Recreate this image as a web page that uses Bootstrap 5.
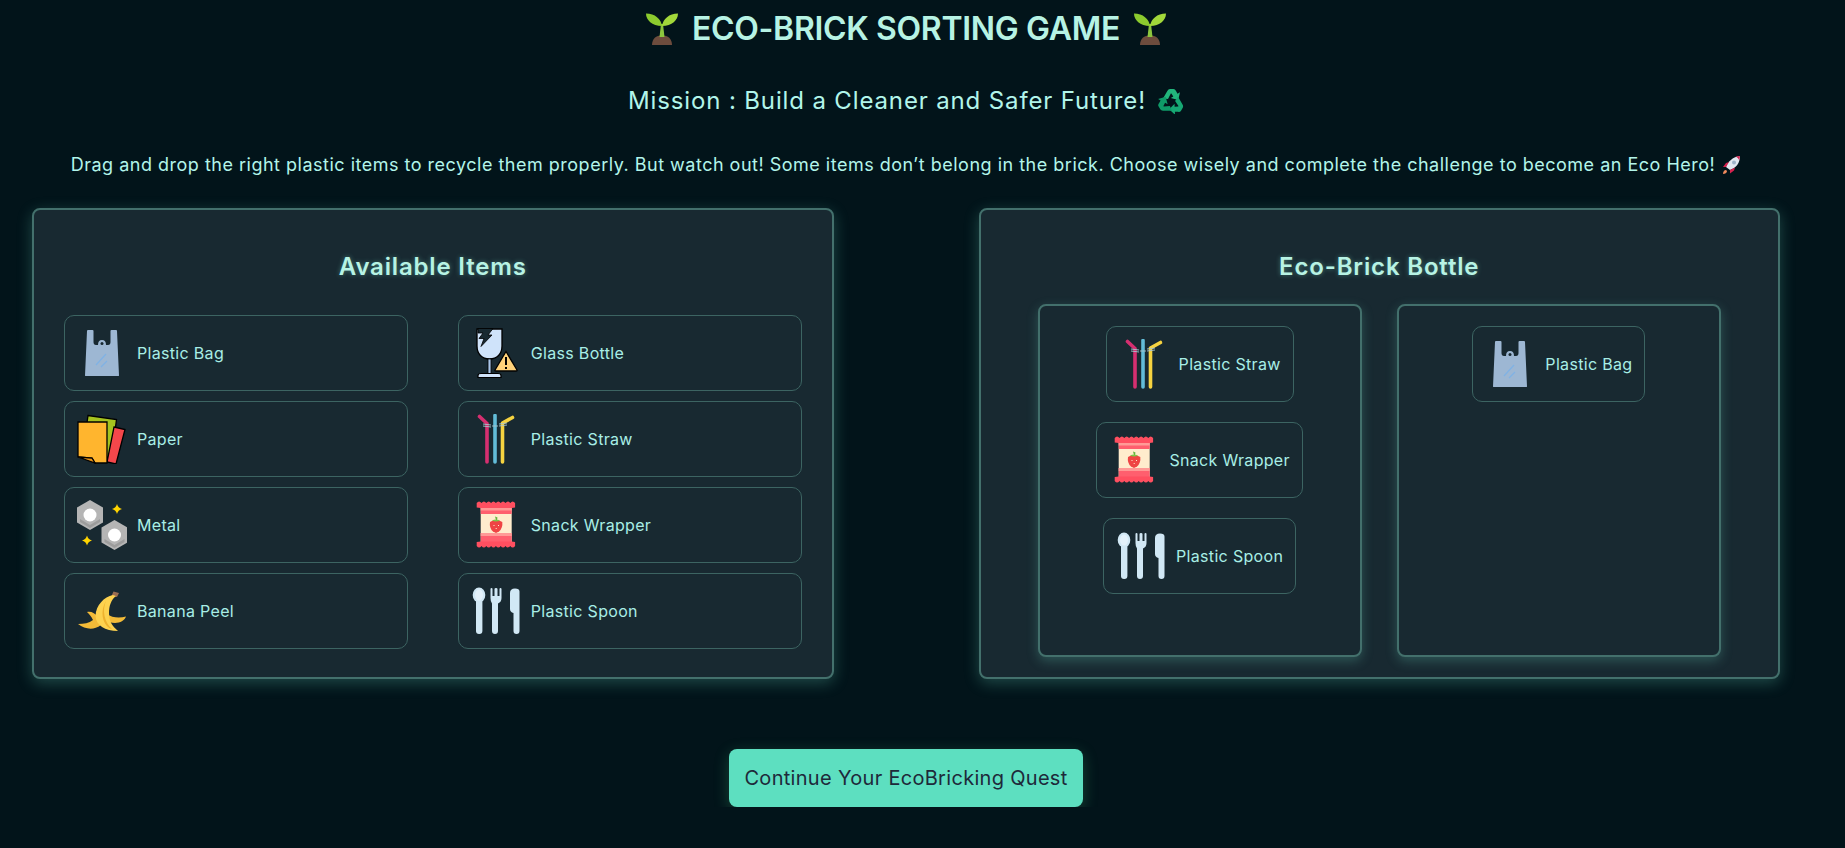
<!DOCTYPE html>
<html lang="en">
<head>
<meta charset="UTF-8">
<meta name="viewport" content="width=device-width, initial-scale=1.0">
<title>Eco-Brick Sorting Game</title>
<link href="https://cdn.jsdelivr.net/npm/bootstrap@5.3.3/dist/css/bootstrap.min.css" rel="stylesheet">
<style>
  body { background: #02141a; color: #b2f5ea; font-family: Inter, "Noto Sans", sans-serif; overflow: hidden; }
  .game-wrap { padding: 5px 65px 0 32px; }
  .game-title { font-size: 32px; line-height: 48px; font-weight: 600; margin: 0; gap: 14px; color: #b7f3e4; letter-spacing: -.33px; }
  .game-mission { font-size: 24px; line-height: 36px; font-weight: 400; margin: 30px 0 0; gap: 12px; letter-spacing: .86px; }
  .game-intro { font-size: 18px; line-height: 26px; margin: 33px 0 30px; gap: 8px; letter-spacing: .5px; white-space: nowrap; }
  .panels { display: grid; grid-template-columns: 1fr 1fr; column-gap: 145px; }
  .panel-box { background: #182931; border: 2px solid #43706c; border-radius: 8px; box-shadow: 0 4px 15px rgba(100, 200, 180, .3); padding: 38px 30px 28px; }
  .panel-head { font-size: 24px; line-height: 36px; font-weight: 600; margin: 0 0 30px; padding-top: 1px; text-shadow: 0 0 5px rgba(120, 220, 200, .45); color: #b7f3e4; letter-spacing: .83px; }
  .items-grid { display: grid; grid-template-columns: 1fr 1fr; column-gap: 50px; row-gap: 10px; }
  .eco-item { padding: 12px; border: 1px solid #3c6462; border-radius: 10px; background: #182931; color: #a8eee6; font-size: 16px; line-height: 24px; letter-spacing: .32px; }
  .eco-ico { width: 50px; height: 50px; flex: none; margin-right: 10px; }
  .bottle-box { padding-left: 57px; padding-right: 57px; padding-bottom: 20px; }
  .bottle-box .panel-head { margin-bottom: 19px; }
  .drop-row { display: grid; grid-template-columns: 1fr 1fr; column-gap: 35px; height: 353px; }
  .drop-zone { background: #182931; border: 2px solid #43706c; border-radius: 8px; box-shadow: 0 4px 12px rgba(100, 200, 180, .28); padding-top: 20px; gap: 20px; }
  .quest-btn { margin-top: 70px; height: 58px; padding: 0 15px; background: #5ddfc0; border: 0; border-radius: 8px; color: #1e2a3a; font-size: 20px; letter-spacing: .3px; box-shadow: 0 4px 15px rgba(72, 187, 120, .3); }
  .quest-btn:hover { background: #5ddfc0; color: #1e2a3a; }
</style>
</head>
<body>

<svg width="0" height="0" class="d-block position-absolute">
  <defs>
    <symbol id="i-sprout" viewBox="0 0 32 32">
      <path d="M6 32c0-6 4-9.700 10-9.700s10 3.700 10 9.700z" fill="#6d4c3d"/>
      <path d="M13.500 24L15 11h2l1.500 13z" fill="#8cc63e"/>
      <path d="M16 13C15 6 9 .5 0 .5 0 7 6 13 16 13z" fill="#8ccb2e"/>
      <path d="M16 13C17 6 23 .5 32 .5 32 7 26 13 16 13z" fill="#a2d83a"/>
    </symbol>
    <symbol id="i-recycle" viewBox="0 0 26 26">
      <defs><path id="i-arrow" d="M5 10.500L9.300 3Q10.300 1 12 1H15.500Q17.200 1 18 3L19.500 5.700 22 4.300 20.200 12 12.800 10 15.300 8.500 13.400 5.500H12.800L10 11z"/></defs>
      <use href="#i-arrow" fill="#22b67c"/>
      <use href="#i-arrow" fill="#16a873" transform="rotate(120 13 14)"/>
      <use href="#i-arrow" fill="#0f9a68" transform="rotate(240 13 14)"/>
    </symbol>
    <symbol id="i-rocket" viewBox="0 0 18 18">
      <path d="M3 11C5 5 10 1 17 0c0 7-4 12-10 14z" fill="#e2e8f0"/>
      <path d="M12 0.800c2 0 4 2 4.200 4L17 0z" fill="#d6224f"/>
      <path d="M3 11L0 11l3-4 3-1zM7 14l0 3.500 4-3 1-3z" fill="#d6224f"/>
      <circle cx="11" cy="6.500" r="2" fill="#9fb3c8"/>
      <path d="M3 14c-2 0-3 2-3 4 2 0 4-1 4-3z" fill="#f08a5d"/>
    </symbol>
    <symbol id="i-bag" viewBox="0 0 50 50">
      <path d="M10 3q0-1 1-1h4.500q1 0 1 1v11q0 3 2.500 3h2q0-5 4-5t4 5h2q2.500 0 2.500-3V3q0-1 1-1H39q1 0 1 1l2 44.500q0 .5-1 .5H9q-1 0-1-.5z" fill="#9db7d3"/>
      <circle cx="25" cy="15.500" r="1.500" fill="#182931"/>
      <path d="M19 37l10-11M24 39l6-6" stroke="#7fb2e5" stroke-width="1.200" fill="none"/>
    </symbol>
    <symbol id="i-paper" viewBox="0 0 50 50">
      <path d="M11 1.500l28.500 4-5 38-29-2z" fill="#a5c31f" stroke="#000" stroke-width="1.300"/>
      <path d="M37 13l11 2.500-9 34.500-9-2z" fill="#f5474b" stroke="#000" stroke-width="1.300"/>
      <path d="M1 8h29v41H18l-3-5-14-1z" fill="#ffb52e" stroke="#000" stroke-width="1.300"/>
      <path d="M1 43l14 1 3 5z" fill="#e8941a" stroke="#000" stroke-width="1.300"/>
    </symbol>
    <symbol id="i-metal" viewBox="0 0 50 50">
      <path d="M13 0l13 7.500v15L13 30 0 22.500v-15z" fill="#b5b5b5"/>
      <path d="M3 19l10 6 10-6v3l-10 6-10-6z" fill="#9c9c9c"/>
      <circle cx="13" cy="15" r="6.500" fill="#fff"/>
      <path d="M37.500 20l13 7.500v15L37.500 50l-13-7.500v-15z" fill="#b5b5b5"/>
      <path d="M27.500 39l10 6 10-6v3l-10 6-10-6z" fill="#9c9c9c"/>
      <circle cx="37.500" cy="35" r="6.500" fill="#fff"/>
      <path d="M40 4q1 4 5 5-4 1-5 5-1-4-5-5 4-1 5-5zM10 35.500q1 4 5 5-4 1-5 5-1-4-5-5 4-1 5-5z" fill="#ffd400"/>
    </symbol>
    <symbol id="i-banana" viewBox="0 0 50 50">
      <path d="M34.500 10l2-4.500 5.500 1.500-2 4z" fill="#9a6d52"/>
      <path d="M10 26C14 25 18 27 21 31L24 39C16 45 8 43 1 38 7 38 12 37 16 34 14 30 12 28 10 26z" fill="#f3bb38"/>
      <path d="M30 28C35 32 43 32 49 30.500 47 36 40 38.500 32 36z" fill="#f3bb38"/>
      <path d="M36 9C27 11 19 19 18.500 30 19 39 28 45 41 45 35 40 32 35 32 27 32 20 34 14 39 10z" fill="#fdd24f"/>
      <path d="M29 15C25 24 27 36 35 43L32.500 42.300C25 37 23 25 29 15z" fill="#eeb22e"/>
    </symbol>
    <symbol id="i-glass" viewBox="0 0 50 50">
      <path d="M6 1h25v17c0 8-5 13-12.500 13S6 26 6 18z" fill="#cfe3fa" stroke="#000" stroke-width="1.300"/>
      <path d="M7 .5H22L17 7h4L10 18.500 13 10.500H8L12 5H7z" fill="#182931" stroke="#000" stroke-width=".8"/>
      <path d="M17 31h3v15h-3z" fill="#a9c6ea" stroke="#000" stroke-width=".8"/>
      <path d="M7 47.500q0-2 3-2h17q3 0 3 2v2H7z" fill="#cfe3fa" stroke="#000" stroke-width="1.200"/>
      <path d="M35 23.500l11 18.500q.5 1-1 1H25q-1.500 0-1-1z" fill="#ffd27a" stroke="#000" stroke-width="1.300"/>
      <path d="M34 29h2v8h-2zM34 39h2v2h-2z" fill="#000"/>
    </symbol>
    <symbol id="i-straw" viewBox="0 0 50 50">
      <g fill="none" stroke-width="3.600" stroke-linecap="round" stroke-linejoin="round">
        <path d="M8.500 2.500l7.500 7V48" stroke="#d52f70"/>
        <path d="M24 1.500V48" stroke="#62bcd8"/>
        <path d="M41.500 3.500l-10 5.500V48" stroke="#f6d340"/>
      </g>
      <path d="M12 10l8 1M12 12l8 1M28 10l8-1M28 12l8-1M21 12h6" stroke="#a9c7d0" stroke-width=".9" fill="none"/>
    </symbol>
    <symbol id="i-snack" viewBox="0 0 50 50">
      <path d="M9.700 5h31v40h-31z" fill="#ffeccd"/>
      <path d="M9.700 5h31v9h-31zM9.700 33h31v12h-31z" fill="#ff5f6e"/>
      <path d="M9.700 8h31v2.500h-31zM9.700 33h31v3h-31z" fill="#ff9a96"/>
      <path d="M5.700 3q2.400-3 4.800 0 2.400-3 4.800 0 2.400-3 4.800 0 2.400-3 4.800 0 2.400-3 4.800 0 2.400-3 4.800 0 2.400-3 4.800 0 2.400-3 4.800 0V7.500L40.700 8H9.700L5.700 7.500z" fill="#ff4f60"/>
      <path d="M5.700 46q2.400 3 4.800 0 2.400 3 4.800 0 2.400 3 4.800 0 2.400 3 4.800 0 2.400 3 4.800 0 2.400 3 4.800 0 2.400 3 4.800 0 2.400 3 4.800 0v-4L40.700 41.500H9.700L5.700 42z" fill="#ff4f60"/>
      <path d="M25 20l-1-3.500 2.500 1-.5 2.500z" fill="#62b43c"/>
      <path d="M19 22q6-4 12.300 0 .7 6-3.300 9.500L25 33l-3-1.500q-4-3.500-3-9.500z" fill="#ef4444"/>
      <path d="M21 20.500q4-2 8 0-4 2-8 0z" fill="#7cc44a"/>
      <path d="M22.500 25h1v1h-1zM27 25h1v1h-1zM24.700 28h1v1h-1z" fill="#ffeccd"/>
    </symbol>
    <symbol id="i-spoon" viewBox="0 0 50 50">
      <g fill="#d1e8f5">
        <ellipse cx="8" cy="9" rx="6.300" ry="7.500"/>
        <rect x="5" y="10" width="6.400" height="38" rx="3"/>
        <path d="M19.500 3q0-1 1-1t1 1v7h2V3q0-1 1.500-1T26.500 3v7h2V3q0-1 1-1t1 1V12q0 4-3.500 5.500V45a3 3 0 0 1-6 0V17.500Q19.500 16 19.500 12z"/>
        <path d="M44 2.500q4.500 0 4.500 3V45a3 3 0 0 1-6 0V27Q39 26 39 23V7q0-4.500 5-4.500z"/>
      </g>
      <ellipse cx="8" cy="9" rx="4" ry="5.500" fill="#e4f2fb"/>
    </symbol>
  </defs>
</svg>

<div class="game-wrap">
  <h1 class="game-title d-flex justify-content-center align-items-center"><svg width="32" height="32"><use href="#i-sprout"/></svg><span>ECO-BRICK SORTING GAME</span><svg width="32" height="32"><use href="#i-sprout"/></svg></h1>
  <h2 class="game-mission d-flex justify-content-center align-items-center"><span>Mission : Build a Cleaner and Safer Future!</span><svg width="26" height="26"><use href="#i-recycle"/></svg></h2>
  <p class="game-intro d-flex justify-content-center align-items-center"><span>Drag and drop the right plastic items to recycle them properly. But watch out! Some items don’t belong in the brick. Choose wisely and complete the challenge to become an Eco Hero!</span><svg width="18" height="18"><use href="#i-rocket"/></svg></p>

  <div class="panels">
    <section class="panel-box">
      <h3 class="panel-head text-center">Available Items</h3>
      <div class="items-grid">
        <div class="eco-item d-flex align-items-center"><svg class="eco-ico"><use href="#i-bag"/></svg><span>Plastic Bag</span></div>
        <div class="eco-item d-flex align-items-center"><svg class="eco-ico"><use href="#i-glass"/></svg><span>Glass Bottle</span></div>
        <div class="eco-item d-flex align-items-center"><svg class="eco-ico"><use href="#i-paper"/></svg><span>Paper</span></div>
        <div class="eco-item d-flex align-items-center"><svg class="eco-ico"><use href="#i-straw"/></svg><span>Plastic Straw</span></div>
        <div class="eco-item d-flex align-items-center"><svg class="eco-ico"><use href="#i-metal"/></svg><span>Metal</span></div>
        <div class="eco-item d-flex align-items-center"><svg class="eco-ico"><use href="#i-snack"/></svg><span>Snack Wrapper</span></div>
        <div class="eco-item d-flex align-items-center"><svg class="eco-ico"><use href="#i-banana"/></svg><span>Banana Peel</span></div>
        <div class="eco-item d-flex align-items-center"><svg class="eco-ico"><use href="#i-spoon"/></svg><span>Plastic Spoon</span></div>
      </div>
    </section>

    <section class="panel-box bottle-box">
      <h3 class="panel-head text-center">Eco-Brick Bottle</h3>
      <div class="drop-row">
        <div class="drop-zone d-flex flex-column align-items-center">
          <div class="eco-item d-flex align-items-center"><svg class="eco-ico"><use href="#i-straw"/></svg><span>Plastic Straw</span></div>
          <div class="eco-item d-flex align-items-center"><svg class="eco-ico"><use href="#i-snack"/></svg><span>Snack Wrapper</span></div>
          <div class="eco-item d-flex align-items-center"><svg class="eco-ico"><use href="#i-spoon"/></svg><span>Plastic Spoon</span></div>
        </div>
        <div class="drop-zone d-flex flex-column align-items-center">
          <div class="eco-item d-flex align-items-center"><svg class="eco-ico"><use href="#i-bag"/></svg><span>Plastic Bag</span></div>
        </div>
      </div>
    </section>
  </div>

  <div class="text-center">
    <button type="button" class="btn quest-btn">Continue Your EcoBricking Quest</button>
  </div>
</div>
<script src="https://cdn.jsdelivr.net/npm/bootstrap@5.3.3/dist/js/bootstrap.bundle.min.js"></script>
</body>
</html>
